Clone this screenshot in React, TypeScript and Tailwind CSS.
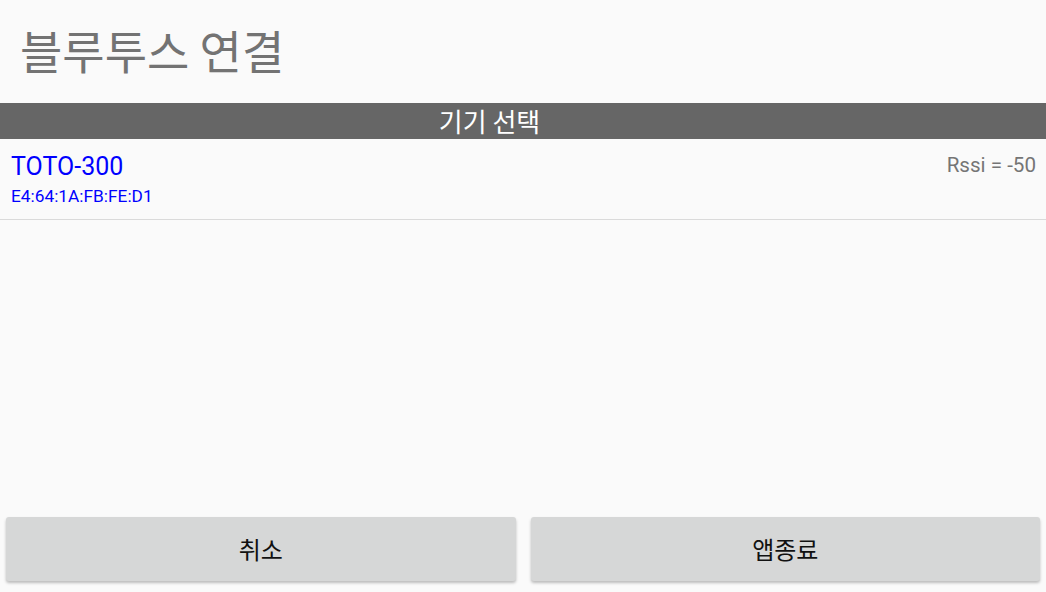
const KR = { fontFamily: '"Noto Sans CJK KR", Roboto, sans-serif' };

function DeviceRow() {
  return (
    <div className="flex h-[81px] justify-between border-b border-[#dadada] font-['Roboto',sans-serif]">
      <div className="pl-[11px] pt-[13px]">
        <div className="text-[25px] leading-[30px] text-[#0000ff]">TOTO-300</div>
        <div className="mt-[4px] text-[17.3px] leading-[20px] text-[#0000ff]">E4:64:1A:FB:FE:D1</div>
      </div>
      <div className="pr-[10px] pt-[14px] text-[20.6px] leading-[24px] text-[#757575]">Rssi = -50</div>
    </div>
  );
}

export default function App() {
  return (
    <div className="flex h-[592px] w-full flex-col bg-[#fafafa]" style={KR}>
      <div className="flex h-[103px] items-center pb-[6px] pl-[20px]">
        <h1 className="text-[46px] leading-none font-normal text-[#737373]">블루투스 연결</h1>
      </div>

      <div className="flex h-[36px] items-center justify-center bg-[#666666] pr-[67px] text-[26px] leading-none text-white">
        기기 선택
      </div>

      <DeviceRow />

      <div className="flex-1" />

      {/* bottom buttons */}
      <div className="flex gap-[15px] px-[6px] pb-[11px]">
        <button className="h-[64px] flex-1 rounded-[3px] bg-[#d6d7d7] text-[24px] text-[#111] shadow-[0_2px_3px_rgba(0,0,0,0.25)]">
          취소
        </button>
        <button className="h-[64px] flex-1 rounded-[3px] bg-[#d6d7d7] text-[24px] text-[#111] shadow-[0_2px_3px_rgba(0,0,0,0.25)]">
          앱종료
        </button>
      </div>
    </div>
  );
}
